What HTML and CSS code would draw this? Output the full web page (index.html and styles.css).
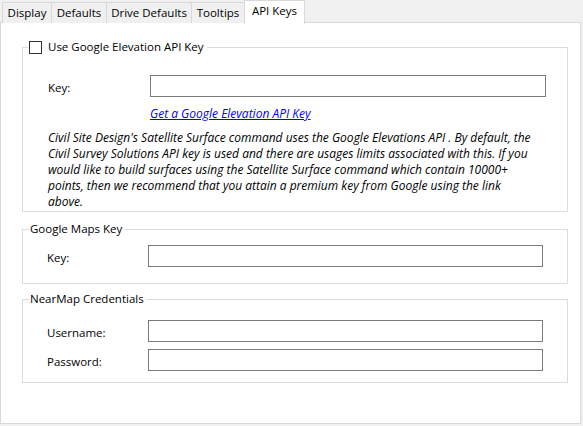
FILE: index.html
```html
<!DOCTYPE html>
<html>
<head>
<meta charset="utf-8">
<link rel="stylesheet" href="styles.css">
</head>
<body>
<div class="window">
  <div class="tabs">
    <div class="tab tab-display">Display</div>
    <div class="tab tab-defaults">Defaults</div>
    <div class="tab tab-drive">Drive Defaults</div>
    <div class="tab tab-tooltips">Tooltips</div>
    <div class="tab tab-api selected">API Keys</div>
  </div>
  <div class="panel">
    <fieldset class="group group-elev">
      <legend><span class="check"></span>Use Google Elevation API Key</legend>
      <div class="row row-elev"><span class="label">Key:</span><span class="input"></span></div>
      <div class="link-row"><a class="link">Get a Google Elevation API Key</a></div>
      <p class="note">Civil Site Design's Satellite Surface command uses the Google Elevations API . By default, the<br>Civil Survey Solutions API key is used and there are usages limits associated with this. If you<br>would like to build surfaces using the Satellite Surface command which contain 10000+<br>points, then we recommend that you attain a premium key from Google using the link<br>above.</p>
    </fieldset>
    <fieldset class="group group-maps">
      <legend>Google Maps Key</legend>
      <div class="row"><span class="label">Key:</span><span class="input"></span></div>
    </fieldset>
    <fieldset class="group group-near">
      <legend>NearMap Credentials</legend>
      <div class="row"><span class="label">Username:</span><span class="input"></span></div>
      <div class="row row-next"><span class="label">Password:</span><span class="input"></span></div>
    </fieldset>
  </div>
</div>
</body>
</html>
```
FILE: styles.css
```css
html, body {
  margin: 0;
  padding: 0;
  background: #f0f0f0;
}
body {
  font-family: "Open Sans", "Noto Sans", sans-serif;
  font-size: 11.5px;
  color: #000;
  width: 583px;
  height: 426px;
  overflow: hidden;
}
.window {
  width: 583px;
}
.tabs {
  display: flex;
  align-items: flex-end;
  height: 23px;
  padding-left: 2px;
  box-sizing: border-box;
}
.tab {
  box-sizing: border-box;
  height: 21px;
  border-top: 1px solid #d9d9d9;
  border-left: 1px solid #d9d9d9;
  background: #f0f0f0;
  line-height: 20px;
  text-align: center;
  white-space: nowrap;
}
.tab-display { width: 49px; }
.tab-defaults { width: 55px; }
.tab-drive { width: 85px; }
.tab-tooltips { width: 53px; }
.tab-api { width: 61px; }
.tab.selected {
  position: relative;
  z-index: 1;
  height: 24px;
  margin-bottom: -1px;
  background: #fff;
  border-right: 1px solid #d9d9d9;
  line-height: 20px;
  padding-bottom: 3px;
}
.panel {
  box-sizing: border-box;
  width: 581px;
  height: 402px;
  margin-top: -1px;
  background: #fff;
  border: 1px solid #d9d9d9;
  padding: 0 12px 0 21px;
  display: flex;
  flex-direction: column;
}
.group {
  margin: 0;
  padding: 0;
  border: 1px solid #dcdcdc;
  min-width: 0;
}
.group legend {
  line-height: 16px;
  height: 16px;
  padding: 0 3px 0 1px;
  margin-left: 6px;
  display: flex;
  align-items: center;
}
.group-elev { margin-top: 16px; padding: 20px 21px 1px 0; }
.group-elev legend { margin-left: 5px; }
.group-maps { margin-top: 9px; padding: 8px 24px 16px 0; }
.group-near { margin-top: 7px; padding: 13px 24px 11px 0; }
.check {
  display: inline-block;
  box-sizing: border-box;
  width: 13px;
  height: 13px;
  border: 1px solid #333;
  background: #fff;
  margin-right: 6px;
}
.row {
  display: grid;
  grid-template-columns: 101px 1fr;
  align-items: center;
  padding-left: 24px;
  height: 22px;
}
.row-elev {
  grid-template-columns: 102px 1fr;
  padding-left: 25px;
}
.row-next { margin-top: 7px; }
.label {
  line-height: 16px;
  padding-top: 3px;
}
.input {
  box-sizing: border-box;
  height: 22px;
  border: 1px solid #7a7a7a;
  background: #fff;
}
.link-row {
  margin-top: 9px;
  padding-left: 127px;
  line-height: 16px;
  font-size: 12px;
}
.link {
  color: #0000ff;
  text-decoration: underline;
  font-style: italic;
}
.note {
  margin: 8px 0 0 25px;
  font-size: 12px;
  font-style: italic;
  line-height: 16px;
  white-space: nowrap;
}
```
